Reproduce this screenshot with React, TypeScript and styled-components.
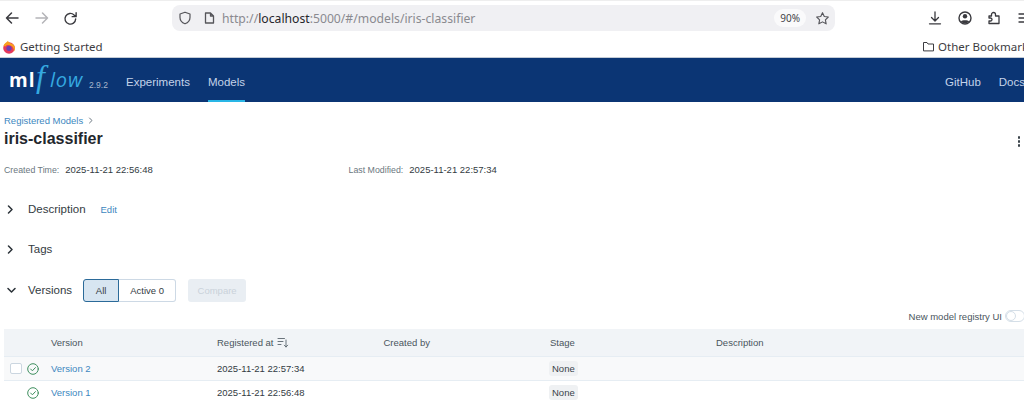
import React from 'react';
import styled, { createGlobalStyle } from 'styled-components';

const GlobalStyle = createGlobalStyle`
  html, body {
    margin: 0;
    padding: 0;
    width: 1024px;
    height: 404px;
    overflow: hidden;
    background: #fff;
    font-family: "Liberation Sans", Arial, sans-serif;
    color: #333;
  }
  * { box-sizing: border-box; }
  svg { flex-shrink: 0; }
`;

const Page = styled.div`
  width: 1024px;
  height: 404px;
  overflow: hidden;
`;

const Toolbar = styled.div`
  height: 36px;
  padding-bottom: 1px;
  display: flex;
  align-items: center;
  overflow: hidden;
  border-top: 1px solid #eeeeee;
`;

const NavIcons = styled.div`
  width: 172px;
  padding-left: 4px;
  display: flex;
  gap: 13.5px;
  align-items: center;
  flex-shrink: 0;
`;

const UrlBar = styled.div`
  width: 663px;
  height: 26px;
  flex-shrink: 0;
  background: #f0f0f3;
  border-radius: 8px;
  display: flex;
  align-items: center;
  padding: 0 5px 0 6px;
`;

const UrlIcons = styled.div`
  display: flex;
  gap: 11px;
  align-items: center;
  margin-right: 6px;
`;

const UrlText = styled.div`
  font-family: "Noto Sans", sans-serif;
  font-size: 12.2px;
  color: #8a8a90;
  flex: 1;
  b { font-weight: 400; color: #26262b; }
`;

const Zoom = styled.div`
  font-family: "Noto Sans", sans-serif;
  font-size: 10px;
  color: #45454a;
  background: #fafafb;
  border-radius: 9px;
  padding: 2px 6px;
  margin-right: 9px;
`;

const ToolIcons = styled.div`
  display: flex;
  gap: 13.5px;
  margin-left: 92px;
  align-items: center;
  flex-shrink: 0;
`;

const Bookmarks = styled.div`
  height: 22px;
  display: flex;
  align-items: center;
  justify-content: space-between;
  padding-left: 2px;
  font-family: "Noto Sans", sans-serif;
  font-size: 11.5px;
  color: #3c3c41;
  white-space: nowrap;
  border-bottom: 1px solid #c4ccd6;
`;

const Bookmark = styled.div<{ $right?: boolean }>`
  display: flex;
  align-items: center;
  gap: ${p => (p.$right ? 3 : 4)}px;
  ${p => p.$right && 'width: 102px; overflow: hidden; flex-shrink: 0;'}
`;

const TopNav = styled.nav`
  height: 44px;
  background: #0b3574;
  display: flex;
  align-items: stretch;
  padding-left: 9px;
  overflow: hidden;
`;

const Logo = styled.div`
  display: flex;
  align-items: center;
  gap: 2px;
  width: 117px;
`;

const LogoVersion = styled.span`
  font-size: 8.5px;
  color: #a9b8cd;
  margin-top: 10px;
`;

const NavLink = styled.a<{ $active?: boolean; $last?: boolean }>`
  display: flex;
  align-items: center;
  font-size: 11.5px;
  color: #c4d3e9;
  margin-right: ${p => (p.$last ? -1 : 18)}px;
  white-space: nowrap;
  height: 44px;
  padding-top: 6px;
  border-bottom: 2px solid ${p => (p.$active ? '#29b6e6' : 'transparent')};
`;

const Spacer = styled.div`
  flex: 1;
`;

const Main = styled.main`
  padding: 13px 0 0 4px;
  position: relative;
`;

const Crumb = styled.div`
  font-size: 9.5px;
  color: #3d87c0;
  line-height: 11px;
  display: flex;
  align-items: center;
  gap: 5px;
`;

const Title = styled.h1`
  margin: 2px 0 0;
  font-size: 16px;
  font-weight: 700;
  line-height: 22px;
  color: #1f272d;
`;

const Kebab = styled.div`
  position: absolute;
  right: 4px;
  top: 34px;
  display: flex;
  flex-direction: column;
  gap: 1.5px;
  i {
    display: block;
    width: 2.5px;
    height: 2.5px;
    border-radius: 50%;
    background: #3a434a;
  }
`;

const Meta = styled.div`
  display: grid;
  grid-template-columns: 344.5px 1fr;
  margin-top: 12px;
  line-height: 12px;
`;

const MetaLabel = styled.span`
  font-size: 8.8px;
  color: #6b7780;
`;

const MetaValue = styled.span`
  font-size: 9.5px;
  color: #333b42;
  margin-left: 6px;
`;

const Section = styled.div<{ $top: number }>`
  display: flex;
  align-items: center;
  margin-top: ${p => p.$top}px;
  height: 16px;
  padding-left: 3px;
  font-size: 11.5px;
  color: #333b42;
`;

const Chevron = styled.span`
  width: 21px;
  display: flex;
  align-items: center;
  flex-shrink: 0;
`;

const EditLink = styled.a`
  margin-left: 15px;
  font-size: 9.5px;
  color: #3d87c0;
  margin-top: 1px;
`;

const Segmented = styled.div`
  display: flex;
  margin-left: 11px;
  height: 23px;
`;

const SegButton = styled.div<{ $active?: boolean; $width: number }>`
  width: ${p => p.$width}px;
  display: flex;
  align-items: center;
  justify-content: center;
  font-size: 9.5px;
  color: #333b42;
  background: ${p => (p.$active ? '#d7e5f1' : '#fff')};
  border: 1px solid ${p => (p.$active ? '#2b6a99' : '#cdd9e5')};
  border-radius: ${p => (p.$active ? '3px 0 0 3px' : '0 3px 3px 0')};
  ${p => !p.$active && 'border-left: none;'}
`;

const CompareButton = styled.div`
  margin-left: 12px;
  width: 58px;
  height: 23px;
  background: #e9eef3;
  border-radius: 3px;
  color: #c9d2da;
  font-size: 9.5px;
  display: flex;
  align-items: center;
  justify-content: center;
`;

const ToggleRow = styled.div`
  display: flex;
  justify-content: flex-end;
  align-items: center;
  gap: 3px;
  margin-top: 11px;
  height: 14px;
  font-size: 9.5px;
  color: #4a555d;
  overflow: hidden;
`;

const Toggle = styled.div`
  width: 20px;
  height: 12px;
  margin-right: -1px;
  border: 1px solid #d5dfe8;
  border-radius: 6px;
  background: #fff;
  flex-shrink: 0;
  i {
    display: block;
    width: 10px;
    height: 10px;
    border-radius: 50%;
    border: 1px solid #d5dfe8;
  }
`;

const Table = styled.div`
  margin-top: 6px;
`;

const Row = styled.div<{ $kind: 'head' | 'even' | 'plain' }>`
  display: grid;
  grid-template-columns: 47px 166px 166.5px 166.5px 166px 1fr;
  align-items: center;
  font-size: 9.5px;
  color: ${p => (p.$kind === 'head' ? '#4a555d' : '#333b42')};
  height: ${p => (p.$kind === 'head' ? 28 : 24)}px;
  background: ${p => (p.$kind === 'head' ? '#f1f4f7' : p.$kind === 'even' ? '#f8f9fa' : '#fff')};
  border-bottom: 1px solid ${p => (p.$kind === 'plain' ? 'transparent' : '#e6edf3')};
`;

const Cell = styled.div`
  display: flex;
  align-items: center;
  gap: 3px;
  white-space: nowrap;
`;

const StatusCell = styled(Cell)`
  justify-content: flex-start;
  padding-left: 6px;
  gap: 5px;
`;

const Checkbox = styled.div<{ $hidden?: boolean }>`
  width: 12px;
  height: 11px;
  border-radius: 2px;
  border: 1px solid #cbd6e0;
  background: #fff;
  ${p => p.$hidden && 'visibility: hidden;'}
`;

const VersionLink = styled.a`
  color: #3d87c0;
`;

const StageTag = styled.span`
  background: #eff1f3;
  border-radius: 3px;
  padding: 2px 3px;
  margin-left: -1px;
  line-height: 11px;
  color: #3a434a;
`;

const strokeProps = {
  fill: 'none',
  strokeLinecap: 'round' as const,
  strokeLinejoin: 'round' as const,
};

const FirefoxIcon = () => (
  <svg width="14" height="14" viewBox="0 0 14 14">
    <circle cx="7" cy="8" r="5.8" fill="#e5395c" />
    <path d="M1.500 5.500C2.500 3 5 2.500 6 .8c.4 1.400 1.500 2 3.200 2.600 2.600.8 3.800 2.600 3.800 4.800 0 1.400-.5 2.600-1.300 3.600.5-2.600-.5-5-2.700-6C7 4.800 4.500 4.800 3.500 6.500 2.800 6.500 2 6.100 1.500 5.500z" fill="#f9a01e" />
    <circle cx="7" cy="8.300" r="2.600" fill="#6c3fb3" />
  </svg>
);

const LogoMark = () => (
  <svg width="78" height="44" viewBox="0 0 78 44">
    <text x="0" y="29" fontFamily="'Open Sans', sans-serif" fontSize="19" fontWeight="700" letterSpacing="1" fill="#fff">ml</text>
    <text x="27" y="29" fontFamily="'Liberation Serif', serif" fontSize="32" fontStyle="italic" fill="#35a9e0">f</text>
    <text x="41" y="29" fontFamily="'Open Sans', sans-serif" fontSize="20" fontWeight="500" fontStyle="italic" letterSpacing="0.800" fill="#35a9e0">low</text>
  </svg>
);

const CheckCircle = () => (
  <svg width="12" height="12" viewBox="0 0 12 12" {...strokeProps} stroke="#3f8f5f" strokeWidth="1">
    <circle cx="6" cy="6" r="5.300" />
    <path d="m3.600 6 1.800 1.800 3-3.200" />
  </svg>
);

function App() {
  return (
    <Page>
      <GlobalStyle />
      <Toolbar>
        <NavIcons>
          <svg width="16" height="16" viewBox="0 0 16 16" {...strokeProps} stroke="#3a3a3f" strokeWidth="1.5"><path d="M14 8H2.500M7.500 3 2.500 8l5 5" /></svg>
          <svg width="16" height="16" viewBox="0 0 16 16" {...strokeProps} stroke="#b4b4b8" strokeWidth="1.5"><path d="M2 8h11.500M8.500 3l5 5-5 5" /></svg>
          <svg width="15" height="15" viewBox="0 0 16 16" {...strokeProps} stroke="#3a3a3f" strokeWidth="1.5"><path d="M13.500 8.500a5.700 5.700 0 1 1-1.700-4.300L14 6M14 1.800V6H9.800" /></svg>
        </NavIcons>
        <UrlBar>
          <UrlIcons>
            <svg width="14" height="14" viewBox="0 0 14 14" {...strokeProps} stroke="#55555a" strokeWidth="1.2"><path d="M7 1.200 2 3v3.500c0 3 2.200 5.200 5 6.300 2.800-1.100 5-3.300 5-6.300V3z" /></svg>
            <svg width="13" height="14" viewBox="0 0 13 14" {...strokeProps} stroke="#55555a" strokeWidth="1.3"><path d="M2.500 2h5l3 3v7h-8zM7.500 2v3h3" /></svg>
          </UrlIcons>
          <UrlText>http://<b>localhost</b>:5000/#/models/iris-classifier</UrlText>
          <Zoom>90%</Zoom>
          <svg width="15" height="15" viewBox="0 0 16 16" {...strokeProps} stroke="#55555a" strokeWidth="1.2"><path d="m8 1.800 1.900 4 4.300.6-3.100 3 .8 4.300L8 11.600l-3.900 2.100.8-4.300-3.100-3 4.300-.6z" /></svg>
        </UrlBar>
        <ToolIcons>
          <svg width="16" height="16" viewBox="0 0 16 16" {...strokeProps} stroke="#3a3a3f" strokeWidth="1.3"><path d="M8 2v8.500M4.500 7.500 8 11l3.500-3.500M2.500 13.800h11" /></svg>
          <svg width="16" height="16" viewBox="0 0 16 16"><circle cx="8" cy="8" r="6" fill="none" stroke="#3a3a3f" strokeWidth="1.4" /><circle cx="8" cy="6.300" r="2.200" fill="#3a3a3f" /><path d="M3.800 11.500C5 9.800 11 9.800 12.200 11.500 10 14 6 14 3.800 11.500z" fill="#3a3a3f" /></svg>
          <svg width="16" height="16" viewBox="0 0 16 16" {...strokeProps} stroke="#3a3a3f" strokeWidth="1.3"><path d="M3 6h2.500V4.500a2 2 0 0 1 2-2 2 2 0 0 1 2 2V6H13v7.500H3v-2.500h1.500a1.500 1.500 0 0 0 0-3H3z" /></svg>
          <svg width="16" height="16" viewBox="0 0 16 16" {...strokeProps} stroke="#3a3a3f" strokeWidth="1.3"><path d="M3 4h11M3 8h11M3 12h11" /></svg>
        </ToolIcons>
      </Toolbar>
      <Bookmarks>
        <Bookmark><FirefoxIcon />Getting Started</Bookmark>
        <Bookmark $right>
          <svg width="13" height="13" viewBox="0 0 13 13" {...strokeProps} stroke="#3c3c41" strokeWidth="1"><path d="M1.500 10.500v-8h3.500l1 1.500h5.500v6.500z" /></svg>
          Other Bookmarks
        </Bookmark>
      </Bookmarks>
      <TopNav>
        <Logo>
          <LogoMark />
          <LogoVersion>2.9.2</LogoVersion>
        </Logo>
        <NavLink>Experiments</NavLink>
        <NavLink $active>Models</NavLink>
        <Spacer />
        <NavLink>GitHub</NavLink>
        <NavLink $last>Docs</NavLink>
      </TopNav>
      <Main>
        <Crumb>
          Registered Models
          <svg width="6" height="7" viewBox="0 0 6 7" {...strokeProps} stroke="#6b7780" strokeWidth="1"><path d="m1.500 1 2.500 2.500L1.500 6" /></svg>
        </Crumb>
        <Title>iris-classifier</Title>
        <Kebab><i /><i /><i /></Kebab>
        <Meta>
          <div><MetaLabel>Created Time:</MetaLabel><MetaValue>2025-11-21 22:56:48</MetaValue></div>
          <div><MetaLabel>Last Modified:</MetaLabel><MetaValue>2025-11-21 22:57:34</MetaValue></div>
        </Meta>
        <Section $top={25}>
          <Chevron><svg width="7" height="9" viewBox="0 0 7 9" {...strokeProps} stroke="#2b3238" strokeWidth="1.500"><path d="m1.500 1 3.500 3.500L1.500 8" /></svg></Chevron>
          Description
          <EditLink>Edit</EditLink>
        </Section>
        <Section $top={24}>
          <Chevron><svg width="7" height="9" viewBox="0 0 7 9" {...strokeProps} stroke="#2b3238" strokeWidth="1.500"><path d="m1.500 1 3.500 3.500L1.500 8" /></svg></Chevron>
          Tags
        </Section>
        <Section $top={25}>
          <Chevron><svg width="9" height="7" viewBox="0 0 9 7" {...strokeProps} stroke="#2b3238" strokeWidth="1.500"><path d="m1 1.500 3.500 3.500L8 1.500" /></svg></Chevron>
          Versions
          <Segmented>
            <SegButton $active $width={36}>All</SegButton>
            <SegButton $width={57}>Active 0</SegButton>
          </Segmented>
          <CompareButton>Compare</CompareButton>
        </Section>
        <ToggleRow>New model registry UI <Toggle><i /></Toggle></ToggleRow>
        <Table>
          <Row $kind="head">
            <Cell />
            <Cell>Version</Cell>
            <Cell>
              Registered at
              <svg width="12" height="11" viewBox="0 0 12 11" {...strokeProps} stroke="#5a656d" strokeWidth="0.900"><path d="M1 1.500h6.500M1 4.500h5M1 7.500h3M9 3v7M7.300 8.200 9 10l1.700-1.800" /></svg>
            </Cell>
            <Cell>Created by</Cell>
            <Cell>Stage</Cell>
            <Cell>Description</Cell>
          </Row>
          <Row $kind="even">
            <StatusCell>
              <Checkbox />
              <CheckCircle />
            </StatusCell>
            <Cell><VersionLink>Version 2</VersionLink></Cell>
            <Cell>2025-11-21 22:57:34</Cell>
            <Cell />
            <Cell><StageTag>None</StageTag></Cell>
            <Cell />
          </Row>
          <Row $kind="plain">
            <StatusCell>
              <Checkbox $hidden />
              <CheckCircle />
            </StatusCell>
            <Cell><VersionLink>Version 1</VersionLink></Cell>
            <Cell>2025-11-21 22:56:48</Cell>
            <Cell />
            <Cell><StageTag>None</StageTag></Cell>
            <Cell />
          </Row>
        </Table>
      </Main>
    </Page>
  );
}

export default App;
